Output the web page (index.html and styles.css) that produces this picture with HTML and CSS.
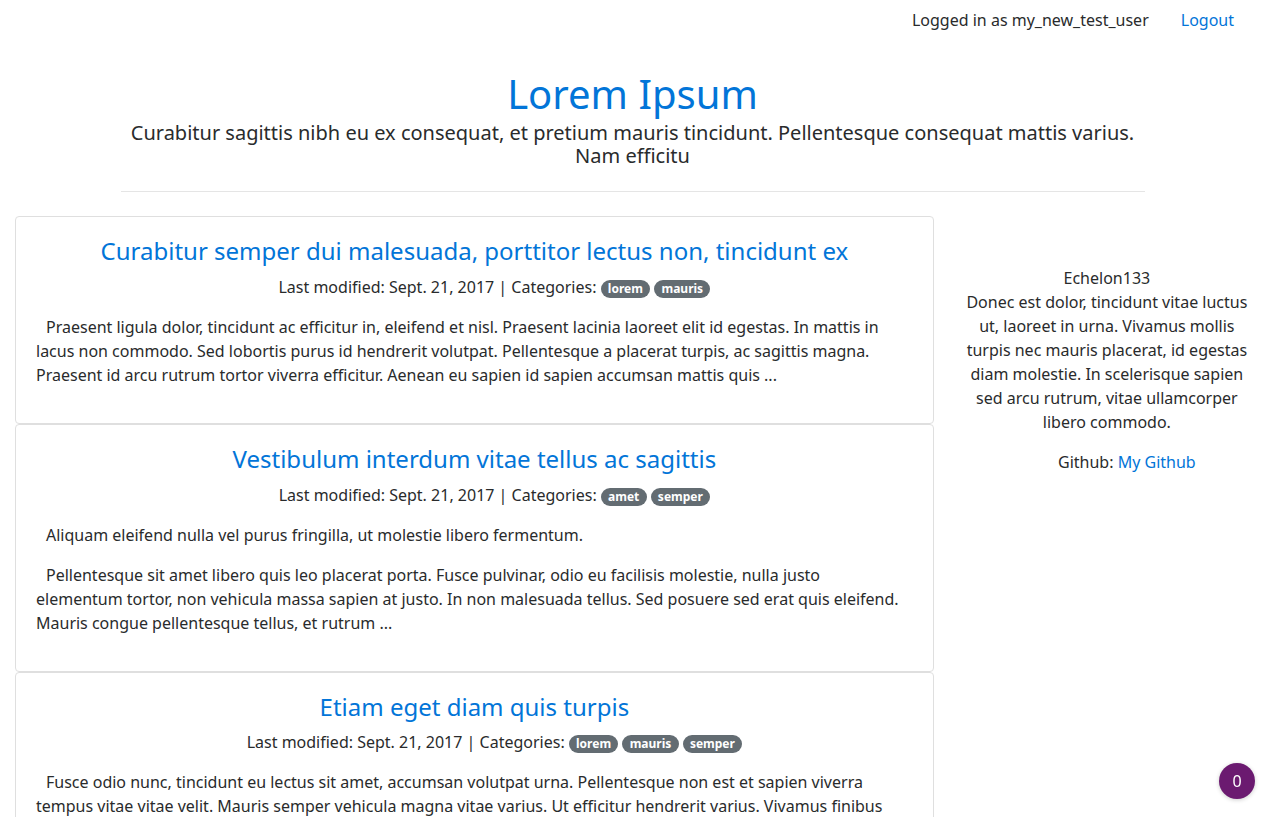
FILE: index.html
```html
<!DOCTYPE html>
<html lang="en">
<head>
<meta charset="utf-8">
<title>Lorem Ipsum</title>
<link rel="stylesheet" href="styles.css">
</head>
<body>
<nav class="topnav">
  <span class="nav-item">Logged in as my_new_test_user</span>
  <a class="nav-item nav-link" href="#">Logout</a>
</nav>
<header class="site-header">
  <h1 class="site-title">Lorem Ipsum</h1>
  <p class="site-subtitle">Curabitur sagittis nibh eu ex consequat, et pretium mauris tincidunt. Pellentesque consequat mattis varius. Nam efficitu</p>
  <hr class="divider">
</header>
<div class="layout">
  <main class="posts">
    <article class="card">
      <h3 class="card-title"><a href="#">Curabitur semper dui malesuada, porttitor lectus non, tincidunt ex</a></h3>
      <p class="meta">Last modified: Sept. 21, 2017 | Categories: <span class="badge">lorem</span> <span class="badge">mauris</span></p>
      <p class="excerpt">Praesent ligula dolor, tincidunt ac efficitur in, eleifend et nisl. Praesent lacinia laoreet elit id egestas. In mattis in lacus non commodo. Sed lobortis purus id hendrerit volutpat. Pellentesque a placerat turpis, ac sagittis magna. Praesent id arcu rutrum tortor viverra efficitur. Aenean eu sapien id sapien accumsan mattis quis ...</p>
    </article>
    <article class="card">
      <h3 class="card-title"><a href="#">Vestibulum interdum vitae tellus ac sagittis</a></h3>
      <p class="meta">Last modified: Sept. 21, 2017 | Categories: <span class="badge">amet</span> <span class="badge">semper</span></p>
      <p class="excerpt">Aliquam eleifend nulla vel purus fringilla, ut molestie libero fermentum.</p>
      <p class="excerpt">Pellentesque sit amet libero quis leo placerat porta. Fusce pulvinar, odio eu facilisis molestie, nulla justo elementum tortor, non vehicula massa sapien at justo. In non malesuada tellus. Sed posuere sed erat quis eleifend. Mauris congue pellentesque tellus, et rutrum ...</p>
    </article>
    <article class="card">
      <h3 class="card-title"><a href="#">Etiam eget diam quis turpis</a></h3>
      <p class="meta">Last modified: Sept. 21, 2017 | Categories: <span class="badge">lorem</span> <span class="badge">mauris</span> <span class="badge">semper</span></p>
      <p class="excerpt">Fusce odio nunc, tincidunt eu lectus sit amet, accumsan volutpat urna. Pellentesque non est et sapien viverra tempus vitae vitae velit. Mauris semper vehicula magna vitae varius. Ut efficitur hendrerit varius. Vivamus finibus lorem at nisl faucibus, vel dictum lorem gravida. Nulla facilisi ...</p>
    </article>
  </main>
  <aside class="sidebar">
    <p class="about">Echelon133<br>Donec est dolor, tincidunt vitae luctus ut, laoreet in urna. Vivamus mollis turpis nec mauris placerat, id egestas diam molestie. In scelerisque sapien sed arcu rutrum, vitae ullamcorper libero commodo.</p>
    <p class="about indented">Github: <a href="#">My Github</a></p>
  </aside>
</div>
<div class="counter">0</div>
</body>
</html>
```
FILE: styles.css
```css
* { box-sizing: border-box; }
html, body { margin: 0; padding: 0; }
body {
  font-family: "Noto Sans", "Open Sans", sans-serif;
  font-size: 16px;
  line-height: 24px;
  color: #292b2c;
  background: #fff;
}
a { color: #0275d8; text-decoration: none; }
.topnav {
  display: flex;
  justify-content: flex-end;
  padding: 0 15px;
}
.nav-item { padding: 8px 16px; }
.site-header {
  width: 1024px;
  margin: 0 auto;
  text-align: center;
}
.site-title {
  margin: 30px 0 0;
  font-size: 40px;
  line-height: 48px;
  font-weight: 400;
  color: #0275d8;
}
.site-subtitle {
  margin: 3px 0 0;
  font-size: 20px;
  line-height: 23px;
}
.divider {
  margin: 24px 0 0;
  border: 0;
  border-top: 1px solid #e5e5e5;
}
.layout {
  display: flex;
  padding-top: 24px;
}
.posts {
  width: 75%;
  padding: 0 15px;
}
.sidebar {
  width: 25%;
  padding: 50px 15px 0;
  text-align: center;
}
.about { margin: 0 0 16px; }
.indented { text-indent: 40px; }
.card {
  border: 1px solid #dfdfdf;
  border-radius: 4px;
  padding: 20px;
  text-align: center;
}
.card-title {
  margin: 0 0 9px;
  font-size: 24px;
  line-height: 28.8px;
  font-weight: 400;
}
.meta { margin: 0 0 16px; text-indent: 40px; }
.badge {
  display: inline-block;
  padding: 3px 7.2px;
  font-size: 12px;
  line-height: 1;
  font-weight: 700;
  color: #fff;
  background: #636c72;
  border-radius: 10rem;
  text-indent: 0;
}
.excerpt {
  margin: 0 8px 16px 0;
  text-align: left;
  text-indent: 10px;
}
.counter {
  position: fixed;
  right: 10px;
  bottom: 18px;
  width: 36px;
  height: 36px;
  border-radius: 50%;
  background: #6b1a70;
  color: #fff;
  font-size: 16px;
  line-height: 36px;
  text-align: center;
  box-shadow: 0 1px 4px rgba(0,0,0,0.2);
}
```
